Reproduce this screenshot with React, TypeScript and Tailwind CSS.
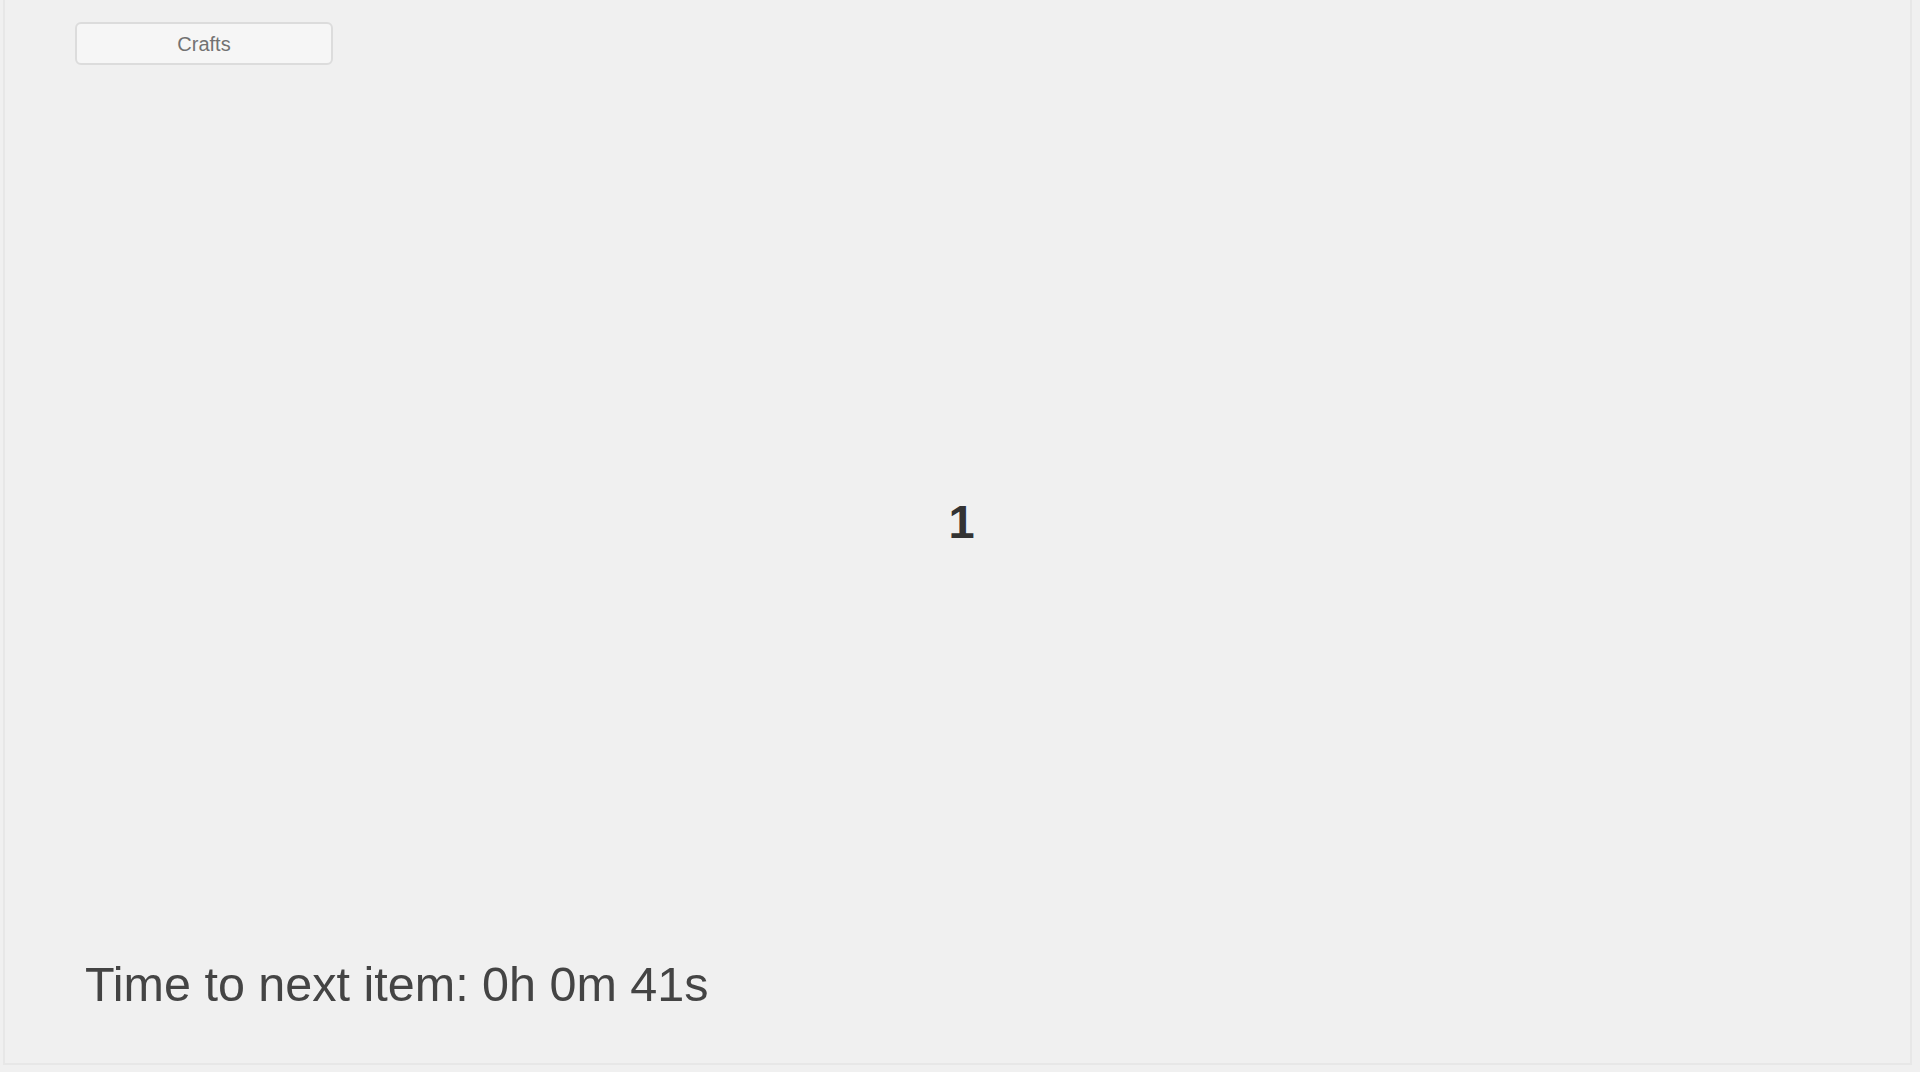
import React from "react";

export default function App() {
  return (
    <div
      className="w-full h-[1072px] bg-[#f0f0f0] flex overflow-hidden"
      style={{ fontFamily: '"Liberation Sans", Arial, sans-serif' }}
    >
      <div className="ml-[3px] w-[1909px] h-[1065px] border-l-2 border-r-2 border-b-2 border-[#e7e7e7] flex flex-col">
        <div className="pt-[22px] pl-[70px]">
          <button className="w-[258px] h-[43px] rounded-[6px] border-2 border-[#dcdcdc] bg-[#f6f6f6] text-[20px] text-[#727272] flex items-center justify-center">
            Crafts
          </button>
        </div>
        <div className="flex-1 flex items-center justify-center pt-[22px] pl-[8px]">
          <span className="text-[47px] font-bold text-[#333333] leading-none">1</span>
        </div>
        <div className="pl-[80px] pb-[51px]">
          <span className="text-[48.5px] leading-[56px] text-[#444444]">
            Time to next item: 0h 0m 41s
          </span>
        </div>
      </div>
    </div>
  );
}
